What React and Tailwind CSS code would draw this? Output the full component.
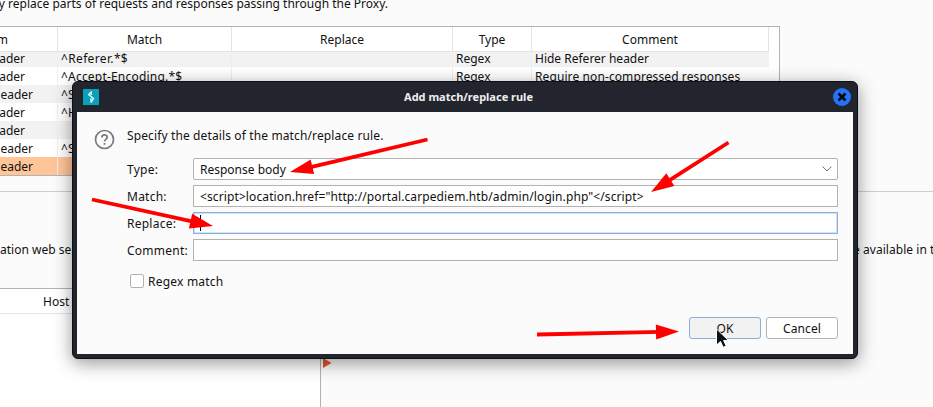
const rows = [
  { item: "ader", match: "^Referer.*$", type: "Regex", comment: "Hide Referer header", bg: "bg-[#f2f2f2]" },
  { item: "ader", match: "^Accept-Encoding.*$", type: "Regex", comment: "Require non-compressed responses", bg: "bg-white" },
  { item: "eader", match: "^S", bg: "bg-[#f2f2f2]" },
  { item: "ader", match: "^H", bg: "bg-white" },
  { item: "ader", match: "", bg: "bg-[#f2f2f2]" },
  { item: "eader", match: "^S", bg: "bg-white" },
  { item: "eader", match: "", bg: "bg-[#ffc599]" },
];

function RulesTable() {
  const grid = "grid grid-cols-[58px_174px_221px_79px_237px]";
  return (
    <div className="h-[150px] w-[780px] overflow-hidden border-y border-r border-[#b4b1b1] bg-white">
      <div className={grid + " relative z-10 h-[25px] border-b border-[#e4e4e4] bg-white text-center leading-[25px] w-[769px]"}>
        <div className="flex justify-end border-r border-[#e4e4e4] pr-[49px]">m</div>
        <div className="border-r border-[#e4e4e4]">Match</div>
        <div className="border-r border-[#e4e4e4]">Replace</div>
        <div className="border-r border-[#e4e4e4]">Type</div>
        <div className="border-r border-[#e4e4e4]">Comment</div>
      </div>
      <div className="-mt-[3px]">
        {rows.map((r, i) => (
          <div key={i} className={grid + " h-[18px] w-[769px] leading-[20px] " + r.bg}>
            <div className={"flex justify-end border-r border-[#eeeeee] " + (r.item === "eader" ? "pr-[24px]" : "pr-[32px]")}>{r.item}</div>
            <div className={"border-r border-[#eeeeee] pl-[3px] " + (i === 0 ? "tracking-[0.35px]" : "tracking-[0.2px]")}>{r.match}</div>
            <div className="border-r border-[#eeeeee]" />
            <div className="border-r border-[#eeeeee] pl-[3px]">{r.type}</div>
            <div className={"pl-[3px] " + (i === 1 ? "tracking-[0.1px]" : "")}>{r.comment}</div>
          </div>
        ))}
      </div>
    </div>
  );
}

function Field({ label, children, className }) {
  return (
    <div className="flex h-[22px] items-center">
      <div className="w-[66px] shrink-0 pt-[2px] tracking-[0.25px]">{label}</div>
      <div className={"flex h-[22px] w-[645px] items-center border bg-white px-[6px] " + className}>{children}</div>
    </div>
  );
}

function Arrow({ x1, y1, x2, y2 }) {
  const a = Math.atan2(y2 - y1, x2 - x1);
  const len = Math.hypot(x2 - x1, y2 - y1);
  return (
    <g transform={`translate(${x1} ${y1}) rotate(${(a * 180) / Math.PI})`} fill="#fe0000">
      <rect x="0" y="-1.9" width={len - 18} height="3.8" />
      <path d={`M${len} 0 L${len - 23} -7.5 V7.5 Z`} />
    </g>
  );
}

function Dialog() {
  return (
    <div className="absolute left-[72px] top-[81px] flex h-[278px] w-[786px] flex-col rounded-[6px] border border-[#0e0f14] bg-[#22252e] px-1 pb-1 shadow-[0_4px_18px_rgba(0,0,0,0.42)]">
      <div className="flex h-[30px] shrink-0 items-center pl-[6px] pr-[2px]">
        <svg width="16" height="16" viewBox="0 0 16 16">
          <rect width="16" height="16" fill="#07a2ba" />
          <path d="M8.6 2.5 L5.6 5.6 L10.6 9.4 L8 13.6 M8.3 2.3 V6 M8 9 V13.5" fill="none" stroke="#e6f7fa" strokeWidth="1.3" />
        </svg>
        <div className="flex-1 pl-[5px] text-center text-[11px] font-bold text-[#eeeeee]">Add match/replace rule</div>
        <svg width="18" height="18" viewBox="0 0 18 18">
          <circle cx="9" cy="9" r="9" fill="#2674f6" />
          <path d="M5.5 5.5 L12.5 12.5 M12.5 5.5 L5.5 12.5" stroke="#05070c" strokeWidth="2.5" />
        </svg>
      </div>
      <div className="flex flex-1 bg-[#fbfbfb] pl-[17px] pt-[13px]">
        <svg className="mt-[4px] shrink-0" width="21" height="21" viewBox="0 0 21 21" fill="none" stroke="#7b7b7b">
          <circle cx="10.5" cy="10.5" r="9" strokeWidth="1.7" />
          <path d="M7.8 8.6 C7.8 5 13.3 5.2 13.2 8.3 C13.1 10.3 10.5 10.4 10.5 12.6 M10.5 14 V15.8" strokeWidth="1.8" />
        </svg>
        <div className="ml-[12px] flex w-[711px] flex-col">
          <div className="h-[33px] leading-[22px] tracking-[0.125px]">Specify the details of the match/replace rule.</div>
          <div className="flex flex-col gap-[5px]">
            <Field label="Type:" className="justify-between rounded-[2px] border-[#b4b1b1] !pr-[5px]">
              <span className="pt-[2px]">Response body</span>
              <svg width="10" height="6" viewBox="0 0 10 6" fill="none" stroke="#777"><path d="M0.5 0.5 L5 5 L9.5 0.5" /></svg>
            </Field>
            <Field label="Match:" className="border-[#b4b1b1]">
              <span className="whitespace-pre pt-[2px] tracking-[0.107px]">{'<script>location.href="http://portal.carpediem.htb/admin/login.php"</script>'}</span>
            </Field>
            <Field label="Replace:" className="border-[#87afda] shadow-[inset_0_0_0_1px_#cfe2f7]">
              <div className="h-[16px] w-px bg-black" />
            </Field>
            <Field label="Comment:" className="border-[#b4b1b1]" />
          </div>
          <div className="mt-[13px] flex h-[14px] items-center pl-[3px]">
            <div className="h-[14px] w-[14px] rounded-[2px] border border-[#b4b1b1] bg-white" />
            <span className="ml-[4px] pt-[2px] tracking-[0.22px]">Regex match</span>
          </div>
          <div className="mt-[29px] flex justify-end gap-[5px]">
            <button className="h-[22px] w-[72px] rounded-[3px] border border-[#87afda] bg-[#f2f2f2] pt-px leading-[20px]">OK</button>
            <button className="h-[22px] w-[72px] rounded-[3px] border border-[#b4b1b1] bg-white pt-px leading-[20px] tracking-[0.1px]">Cancel</button>
          </div>
        </div>
      </div>
    </div>
  );
}

export default function App() {
  return (
    <div className="relative flex h-[407px] w-[933px] flex-col overflow-hidden whitespace-nowrap bg-[#fbfbfb] font-['Noto_Sans',sans-serif] text-[12px] text-[#111]">
      <div className="flex h-[26px] w-[388px] shrink-0 justify-end leading-[8px]">
        <span>y replace parts of requests and responses passing through the Proxy.</span>
      </div>
      <RulesTable />
      <div className="mt-[15px] h-px shrink-0 bg-[#cdcdcd]" />
      <div className="flex h-[96px] shrink-0 justify-between pt-[47px] leading-[22px]">
        <span>ation web se</span>
        <span className="flex w-[80px] tracking-[0.05px]">e available in t</span>
      </div>
      <div className="flex flex-1">
        <div className="w-[321px] border-r border-t border-[#b4b1b1] bg-white">
          <div className="h-[25px] border-b border-[#e4e4e4] pl-[43px] leading-[26px]">Host</div>
        </div>
        <svg className="ml-[2px] mt-[70px]" width="9" height="10" viewBox="0 0 9 10"><path d="M0 0 L8.5 5 L0 10 Z" fill="#e5592b" /></svg>
      </div>
      <Dialog />
      <svg className="absolute inset-0" width="933" height="407" viewBox="0 0 933 407">
        <Arrow x1={427.5} y1={139.5} x2={290} y2={172} />
        <Arrow x1={728.5} y1={142.5} x2={651} y2={192} />
        <Arrow x1={92} y1={199.5} x2={213} y2={226} />
        <Arrow x1={537} y1={334.5} x2={679} y2={331.5} />
        <path d="M716.5 329 V345 L720.5 341.5 L723.2 347.3 L726.2 346 L723.6 340.5 H728.5 Z" fill="#111" stroke="#fff" strokeWidth="1" />
      </svg>
    </div>
  );
}
